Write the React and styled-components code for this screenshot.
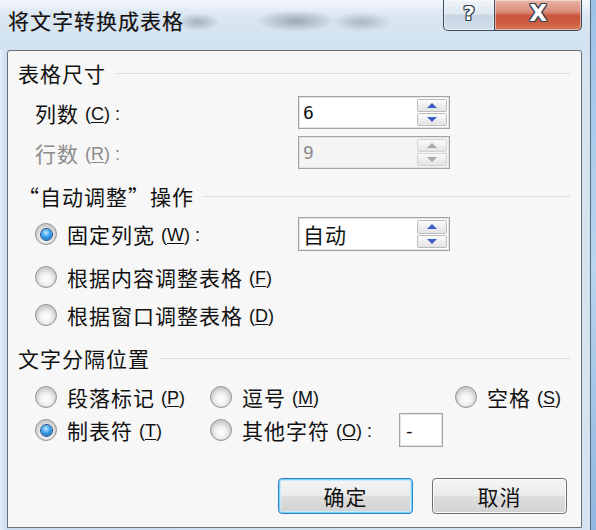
import React from "react";
import styled, { createGlobalStyle } from "styled-components";

const Global = createGlobalStyle`
  html, body { margin: 0; padding: 0; background: #c4d9ee; }
  body { font-family: "Noto Sans CJK SC", "Noto Sans", sans-serif; }
  * { box-sizing: border-box; }
`;

const Screen = styled.div`
  width: 596px;
  height: 530px;
  display: flex;
  overflow: hidden;
`;

const Window = styled.div`
  width: 591px;
  height: 530px;
  display: flex;
  flex-direction: column;
  border-right: 1px solid #56687a;
  background: linear-gradient(90deg, #e4edf6 0px, #c9dcef 7px, #d6e4f1 100%);
`;

const Backdrop = styled.div`
  flex: 1;
  background: linear-gradient(180deg, #9cc2e8, #b9d5ef 50%, #8fb7e0);
`;

const TitleBar = styled.div`
  height: 50px;
  display: flex;
  align-items: flex-start;
  padding-left: 8px;
  background:
    radial-gradient(ellipse 22px 9px at 198px 22px, rgba(100,110,122,0.45), transparent),
    radial-gradient(ellipse 40px 11px at 296px 21px, rgba(80,90,102,0.45), transparent),
    radial-gradient(ellipse 30px 10px at 362px 22px, rgba(100,112,124,0.4), transparent),
    linear-gradient(180deg, #f3f7fb 0px, #dce8f3 14px, #d0e1f0 50px);
`;

const Title = styled.div`
  margin-top: 8px;
  font-size: 21px;
  letter-spacing: 1px;
  line-height: 24px;
  color: #111;
  text-shadow: -0.5px 0 0 rgba(220,120,0,0.35), 0.5px 0 0 rgba(0,90,220,0.35);
`;

const Caption = styled.div`
  margin-left: auto;
  margin-right: 8px;
  display: flex;
  height: 31px;
`;

const CapButton = styled.div`
  width: ${(p) => p.$w}px;
  height: 31px;
  display: flex;
  align-items: center;
  justify-content: center;
  border: 1px solid #3b4c5e;
  border-top: none;
  border-left: ${(p) => (p.$close ? "none" : "1px solid #3b4c5e")};
  border-radius: ${(p) => (p.$close ? "0 0 5px 0" : "0 0 0 5px")};
  background: ${(p) =>
    p.$close
      ? "linear-gradient(180deg, #e7b4a8 0%, #db8a78 40%, #c9553c 52%, #cd5f43 80%, #dc7a5a 100%)"
      : "linear-gradient(180deg, #f1f5f9 0%, #dfe7f0 45%, #c6d4e3 52%, #d3dfeb 100%)"};
  box-shadow: inset 0 0 0 1px rgba(255,255,255,0.45);
  font-family: "DejaVu Sans", sans-serif;
  font-weight: bold;
  font-size: ${(p) => (p.$close ? 23 : 20)}px;
  color: #fff;
  text-shadow:
    1px 0 0 #33414f, -1px 0 0 #33414f, 0 1px 0 #33414f, 0 -1px 0 #33414f,
    1px 1px 0 #33414f, -1px -1px 0 #33414f, 1px -1px 0 #33414f, -1px 1px 0 #33414f;
  padding-bottom: 4px;
`;

const Panel = styled.div`
  margin-left: 7px;
  width: 575px;
  height: 478px;
  border: 1px solid #66717c;
  border-radius: 3px 3px 0 0;
  background: #f7f7f7;
  padding: 0 11px 0 10px;
  display: flex;
  flex-direction: column;
`;

const SectionHeader = styled.div`
  margin-top: ${(p) => p.$mt}px;
  height: 22px;
  display: flex;
  align-items: center;
  gap: 10px;
  font-size: 21px;
  letter-spacing: 1px;
  color: #111;
  white-space: nowrap;
  &::after {
    content: "";
    flex: 1;
    height: 1px;
    background: #d3dee6;
  }
`;

const FieldRow = styled.div`
  margin-top: ${(p) => p.$mt}px;
  height: ${(p) => p.$h}px;
  padding-left: 17px;
  display: grid;
  grid-template-columns: 263px 152px;
  align-items: center;
`;

const Label = styled.div`
  font-size: 21px;
  letter-spacing: 1px;
  color: ${(p) => (p.$disabled ? "#8c8c8c" : "#111")};
  white-space: nowrap;
`;

const Key = styled.span`
  font-family: "Liberation Sans", sans-serif;
  font-size: 18px;
  letter-spacing: 0;
  margin-left: 6px;
  vertical-align: 2px;
  u { text-underline-offset: 2px; }
`;

const SpinBox = styled.div`
  width: 152px;
  height: ${(p) => p.$h}px;
  border: 1px solid #a3a3a3;
  box-shadow: inset 0 0 0 1px #e4e4e4;
  background: ${(p) => (p.$disabled ? "#f4f4f4" : "#fff")};
  display: flex;
  align-items: center;
  padding: 2px 2px 2px 4px;
`;

const SpinValue = styled.div`
  flex: 1;
  font-family: ${(p) => (p.$num ? '"DejaVu Sans Mono", monospace' : '"Noto Sans CJK SC", sans-serif')};
  font-size: ${(p) => (p.$num ? 18 : 21)}px;
  letter-spacing: 1px;
  color: ${(p) => (p.$disabled ? "#8c8c8c" : "#111")};
`;

const Spinner = styled.div`
  width: 30px;
  height: 100%;
  display: flex;
  flex-direction: column;
  gap: 1px;
`;

const SpinButton = styled.div`
  flex: 1;
  border: 1px solid ${(p) => (p.$disabled ? "#d4d4d4" : "#bcbcbc")};
  border-radius: 2px;
  background: linear-gradient(180deg, #fbfbfb, #e3e3e3);
  display: flex;
  align-items: center;
  justify-content: center;
  &::before {
    content: "";
    border-left: 5px solid transparent;
    border-right: 5px solid transparent;
    ${(p) => (p.$down ? "border-top" : "border-bottom")}: 5px solid ${(p) => (p.$disabled ? "#a8a8a8" : "#3a5fc8")};
  }
`;

const Spin = ({ value, disabled, num, h }) => (
  <SpinBox $disabled={disabled} $h={h}>
    <SpinValue $disabled={disabled} $num={num}>{value}</SpinValue>
    <Spinner>
      <SpinButton $disabled={disabled} />
      <SpinButton $disabled={disabled} $down />
    </Spinner>
  </SpinBox>
);

const RadioRow = styled.div`
  margin-top: ${(p) => p.$mt}px;
  height: ${(p) => p.$h}px;
  padding-left: 17px;
  display: grid;
  grid-template-columns: ${(p) => p.$cols || "1fr"};
  align-items: center;
`;

const Option = styled.div`
  display: flex;
  align-items: center;
  gap: 10px;
  font-size: 21px;
  letter-spacing: 1px;
  color: #111;
  white-space: nowrap;
`;

const OptionText = styled.span`
  white-space: nowrap;
`;

const RadioDot = styled.span`
  width: 22px;
  height: 22px;
  border-radius: 50%;
  flex: none;
  border: 1px solid #939393;
  background: radial-gradient(circle at 50% 60%, #ffffff 0%, #f2f2f2 35%, #c9c9c9 70%, #e6e6e6 100%);
  display: flex;
  align-items: center;
  justify-content: center;
  &::after {
    content: "";
    width: 11px;
    height: 11px;
    border-radius: 50%;
    display: ${(p) => (p.$checked ? "block" : "none")};
    background: radial-gradient(circle at 45% 35%, #bfe6ff 0%, #3aa0ea 45%, #0d4f9e 100%);
    box-shadow: 0 0 0 1px #1f4f86;
  }
`;

const SmallInput = styled.div`
  margin-left: 17px;
  width: 44px;
  height: 34px;
  border: 1px solid #a3a3a3;
  box-shadow: inset 0 0 0 1px #e4e4e4;
  background: #fff;
  font-family: "DejaVu Sans", sans-serif;
  font-size: 18px;
  padding-left: 6px;
  display: flex;
  align-items: center;
`;

const ButtonRow = styled.div`
  margin-top: 31px;
  display: flex;
  justify-content: flex-end;
  gap: 19px;
  padding-right: 3px;
`;

const Button = styled.div`
  width: 135px;
  height: 36px;
  border-radius: 4px;
  border: 1px solid ${(p) => (p.$default ? "#2c86c8" : "#707070")};
  box-shadow: ${(p) =>
    p.$default
      ? "inset 0 0 0 1px #7fd0f6, inset 0 0 0 2px #c6ecfb"
      : "inset 0 0 0 1px #fbfbfb"};
  background: linear-gradient(180deg, #f4f4f4 0%, #ececec 48%, #dddddd 52%, #d3d3d3 100%);
  display: flex;
  align-items: center;
  justify-content: center;
  font-size: 21px;
  letter-spacing: 1px;
  color: #111;
`;

const K = ({ k, colon }) => (
  <Key>
    (<u>{k}</u>){colon ? " :" : ""}
  </Key>
);

export default function App() {
  return (
    <>
      <Global />
      <Screen>
        <Window>
          <TitleBar>
            <Title>将文字转换成表格</Title>
            <Caption>
              <CapButton $w={52}>?</CapButton>
              <CapButton $w={87} $close>X</CapButton>
            </Caption>
          </TitleBar>
          <Panel>
            <SectionHeader $mt={11}>表格尺寸</SectionHeader>
            <FieldRow $mt={12} $h={33}>
              <Label>列数<K k="C" colon /></Label>
              <Spin value="6" num h={33} />
            </FieldRow>
            <FieldRow $mt={7} $h={33}>
              <Label $disabled>行数<K k="R" colon /></Label>
              <Spin value="9" num disabled h={33} />
            </FieldRow>
            <SectionHeader $mt={16}>“自动调整”操作</SectionHeader>
            <FieldRow $mt={10} $h={34}>
              <Option><RadioDot $checked /><OptionText>固定列宽<K k="W" colon /></OptionText></Option>
              <Spin value="自动" h={34} />
            </FieldRow>
            <RadioRow $mt={11} $h={26}>
              <Option><RadioDot /><OptionText>根据内容调整表格<K k="F" /></OptionText></Option>
            </RadioRow>
            <RadioRow $mt={12} $h={26}>
              <Option><RadioDot /><OptionText>根据窗口调整表格<K k="D" /></OptionText></Option>
            </RadioRow>
            <SectionHeader $mt={21}>文字分隔位置</SectionHeader>
            <RadioRow $mt={13} $h={26} $cols="175px 245px 1fr">
              <Option><RadioDot /><OptionText>段落标记<K k="P" /></OptionText></Option>
              <Option><RadioDot /><OptionText>逗号<K k="M" /></OptionText></Option>
              <Option><RadioDot /><OptionText>空格<K k="S" /></OptionText></Option>
            </RadioRow>
            <RadioRow $mt={5} $h={34} $cols="175px 1fr">
              <Option><RadioDot $checked /><OptionText>制表符<K k="T" /></OptionText></Option>
              <Option>
                <RadioDot />
                <OptionText>其他字符<K k="O" colon /></OptionText>
                <SmallInput>-</SmallInput>
              </Option>
            </RadioRow>
            <ButtonRow>
              <Button $default>确定</Button>
              <Button>取消</Button>
            </ButtonRow>
          </Panel>
        </Window>
        <Backdrop />
      </Screen>
    </>
  );
}
